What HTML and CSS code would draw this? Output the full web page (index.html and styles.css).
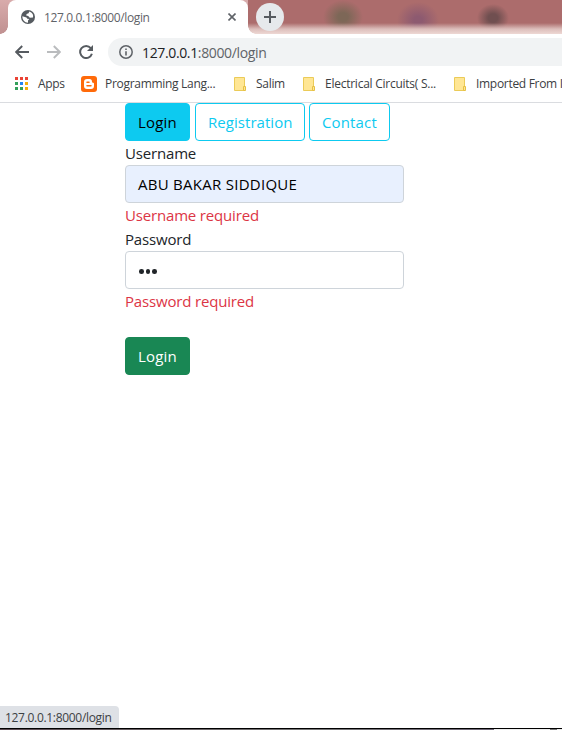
FILE: index.html
```html
<!DOCTYPE html>
<html lang="en">
<head>
<meta charset="utf-8">
<title>127.0.0.1:8000/login</title>
<link rel="stylesheet" href="styles.css">
</head>
<body>
<div class="window">
  <header class="tabstrip">
    <div class="tab">
      <svg class="globe" width="14" height="14" viewBox="0 0 14 14"><circle cx="7" cy="7" r="7" fill="#565b60"/><path d="M8.2 1.4 7.6 3.2 5.6 3.9 5.2 5.6 7.2 6 8.8 7.7 11.9 7.5C12.8 5 11.4 2.3 8.2 1.4ZM1.4 6.2C1.2 9.6 3.6 12.5 7 12.7L7 10.4 8.3 9.1 6.3 8.8 5.5 7.4Z" fill="#fff"/></svg>
      <span class="tab-title">127.0.0.1:8000/login</span>
      <svg class="close" width="8" height="8" viewBox="0 0 8 8"><path d="M.5.5 7.5 7.5M7.5.5.5 7.5" stroke="#5f6368" stroke-width="1.6"/></svg>
    </div>
    <div class="frame">
      <div class="new-tab"><svg width="12" height="12" viewBox="0 0 12 12"><path d="M6 0V12M0 6H12" stroke="#565b60" stroke-width="2"/></svg></div>
    </div>
  </header>
  <nav class="toolbar">
    <svg width="14" height="14" viewBox="0 0 14 14"><path d="M14 7H1.5M7.2 1 1.2 7 7.2 13" fill="none" stroke="#565b60" stroke-width="1.9"/></svg>
    <svg class="forward" width="14" height="14" viewBox="0 0 14 14"><path d="M0 7H12.5M6.8 1 12.8 7 6.8 13" fill="none" stroke="#babcbe" stroke-width="1.9"/></svg>
    <svg class="reload" width="14" height="14" viewBox="0 0 14 14"><path d="M11.8 3.2A6 6 0 1 0 12.9 8.8" fill="none" stroke="#565b60" stroke-width="2"/><path d="M14 0V6H8Z" fill="#565b60"/></svg>
    <div class="omnibox">
      <svg width="14" height="14" viewBox="0 0 14 14"><circle cx="7" cy="7" r="6.2" fill="none" stroke="#5f6368" stroke-width="1.5"/><path d="M7 6.2V10.4M7 3.4V5" stroke="#5f6368" stroke-width="1.6"/></svg>
      <span class="url"><b>127.0.0.1</b>:8000/login</span>
    </div>
  </nav>
  <nav class="bookmarks">
    <svg class="bm-apps" width="13" height="13" viewBox="0 0 13 13"><path d="M0 0h3v3H0zM5 0h3v3H5zM10 0h3v3h-3z" fill="#ea4335"/><path d="M0 5h3v3H0zM0 10h3v3H0zM5 10h3v3H5z" fill="#34a05a"/><path d="M5 5h3v3H5z" fill="#2484f2"/><path d="M10 5h3v3h-3zM10 10h3v3h-3z" fill="#f6ae08"/></svg>
    <span class="t-apps">Apps</span>
    <svg class="bm-blog" width="16" height="16" viewBox="0 0 16 16"><rect width="16" height="16" rx="3" fill="#ff6a0a"/><path d="M6 3H8.5Q11 3 11 5.7 11 6.7 12 6.7 13 6.7 13 7.7V10Q13 13 10 13H6Q3 13 3 10V6Q3 3 6 3Z" fill="#fff"/><path d="M6 6.2H8M6 9.8H10" stroke="#ff6a0a" stroke-width="1.5" stroke-linecap="round"/></svg>
    <span class="t-prog">Programming Lang...</span>
    <svg class="folder" width="12" height="14" viewBox="0 0 12 14"><path d="M.5.5H10.5V13.5H.5Z" fill="#ffe694" stroke="#ebcb58"/><path d="M9.5 9.5H11.5V13.5H9.5Z" fill="#ffe694" stroke="#e6c044"/></svg>
    <span class="t-salim">Salim</span>
    <svg class="folder" width="12" height="14" viewBox="0 0 12 14"><path d="M.5.5H10.5V13.5H.5Z" fill="#ffe694" stroke="#ebcb58"/><path d="M9.5 9.5H11.5V13.5H9.5Z" fill="#ffe694" stroke="#e6c044"/></svg>
    <span class="t-elec">Electrical Circuits( S...</span>
    <svg class="folder" width="12" height="14" viewBox="0 0 12 14"><path d="M.5.5H10.5V13.5H.5Z" fill="#ffe694" stroke="#ebcb58"/><path d="M9.5 9.5H11.5V13.5H9.5Z" fill="#ffe694" stroke="#e6c044"/></svg>
    <span class="t-import">Imported From I</span>
  </nav>
  <main class="page">
    <div class="buttons">
      <a class="btn active b-login"><span>Login</span></a>
      <a class="btn b-reg"><span>Registration</span></a>
      <a class="btn b-contact"><span>Contact</span></a>
    </div>
    <form>
      <label class="row l-user">Username</label>
      <div class="field filled"><span>ABU BAKAR SIDDIQUE</span></div>
      <div class="row error e-user">Username required</div>
      <label class="row l-pass">Password</label>
      <div class="field dots"><i></i><i></i><i></i></div>
      <div class="row error e-pass">Password required</div>
      <div class="btn submit b-login"><span>Login</span></div>
    </form>
  </main>
  <footer>
    <div class="status"><span>127.0.0.1:8000/login</span></div>
    <div class="edge"></div>
  </footer>
</div>
</body>
</html>
```
FILE: styles.css
```css
* { box-sizing: border-box; }
body { margin: 0; background: #fff; font-family: "Open Sans", "Noto Sans", sans-serif; color: #212529; }
svg { display: block; flex: none; }
.window { width: 562px; height: 730px; overflow: hidden; display: flex; flex-direction: column; }
span { white-space: nowrap; }

.tabstrip { height: 34px; display: flex; background: linear-gradient(#d8abab, #c09191); flex: none; }
.tab { width: 240px; margin-left: 8px; background: #fff; border-radius: 8px 8px 0 0; display: flex; align-items: center; padding-left: 13px; position: relative; }
.tab::before { content: ""; position: absolute; left: -8px; bottom: 0; width: 8px; height: 8px; background: radial-gradient(circle at 0 0, transparent 7.5px, #fff 8px); }
.tab-title { width: 107px; margin-left: 9px; font-size: 12px; color: #5f6368; letter-spacing: -.36px; }
.close { margin-left: 77px; }
.frame { flex: 1; padding: 3px 0 0 8px; position: relative;
  background:
    radial-gradient(ellipse 20px 17px at 95px 17px, #7d6757 25%, transparent),
    radial-gradient(ellipse 21px 18px at 170px 20px, #8d5a70 20%, transparent),
    radial-gradient(ellipse 16px 14px at 245px 18px, #704f50 30%, transparent),
    #ac6c6c; }
.frame::after { content: ""; position: absolute; inset: 23px 0 0; background: linear-gradient(transparent, #dcbebb 55%, #eed8d4); }
.frame::before { content: ""; position: absolute; left: 0; bottom: 0; width: 8px; height: 8px; background: radial-gradient(circle at 100% 0, transparent 7.5px, #fff 8px); z-index: 1; }
.new-tab { width: 28px; height: 28px; border-radius: 50%; background: #e6e9ec; display: flex; align-items: center; justify-content: center; position: relative; z-index: 2; }

.toolbar { height: 36px; flex: none; display: flex; align-items: center; padding-left: 15px; }
.forward { margin-left: 18px; }
.reload { margin-left: 18px; }
.omnibox { flex: 1; height: 28px; margin-left: 15px; background: #f1f3f4; border-radius: 14px 0 0 14px; display: flex; align-items: center; padding-left: 11px; }
.url { margin-left: 9px; font-size: 14px; color: #5f6368; letter-spacing: -.36px; }
.url b { font-weight: 400; color: #202124; }

.bookmarks { height: 33px; flex: none; display: flex; align-items: center; border-bottom: 1px solid #dadce0; padding: 0 0 5px 15px; font-size: 12px; color: #3c4043; letter-spacing: -.3px; }
.bookmarks span { flex: none; }
.bm-blog, .folder { margin-top: 1px; }
.t-apps { width: 43px; margin-left: 10px; }
.t-prog { width: 129px; margin-left: 8px; }
.folder + span { margin-left: 10px; }
.t-salim { width: 47px; }
.t-elec { width: 129px; letter-spacing: -.25px; }

.page { flex: 1; width: 279px; margin-left: 125px; font-size: 15px; letter-spacing: -.17px; }
.buttons { display: flex; height: 38px; }
.btn { height: 38px; border: 1px solid #0dcaf0; border-radius: 4px; color: #0dcaf0; padding-left: 12px; line-height: 37px; flex: none; letter-spacing: .05px; }
.btn.active { background: #0dcaf0; color: #000; }
.b-login { width: 65px; letter-spacing: .2px; }
.b-reg { width: 110px; margin-left: 5px; }
.b-contact { width: 81px; margin-left: 4px; letter-spacing: .15px; }
.row { display: block; height: 24px; line-height: 24px; white-space: nowrap; }
.error { color: #dc3545; }
.field { height: 38px; border: 1px solid #ced4da; border-radius: 4px; padding-left: 12px; line-height: 36px; display: flex; }
.filled { background: #e8f0fe; color: #000; letter-spacing: .27px; }
.dots { align-items: center; gap: 2px; padding: 3px 0 0 13px; }
.dots i { width: 4.6px; height: 4.6px; border-radius: 50%; background: #212529; }
.submit { margin-top: 24px; background: #198754; border-color: #198754; color: #fff; }

footer { flex: none; }
.status { width: 119px; height: 22px; background: #dee1e6; border-radius: 0 4px 0 0; padding-left: 5px; font-size: 12px; line-height: 23px; color: #3c4043; letter-spacing: -.31px; }
.edge { height: 2px; border-top: 1px solid #000; background: linear-gradient(90deg, #5a4a52 0, #777 55%, #706878 494px, #eee 494px, #eee 550px, #777 550px, #777 557px, #eee 557px); }
```
